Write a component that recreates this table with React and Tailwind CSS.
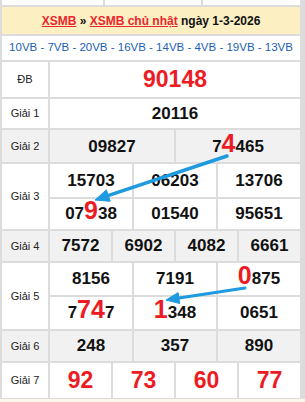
const Big = ({ children }) => (
  <span className="text-[25px] leading-[0] text-[#ed1c24]">{children}</span>
);

const Label = ({ children, gray }) => (
  <div
    className={`w-[46px] shrink-0 flex items-center justify-center text-[11px] text-[#222] ${
      gray ? "bg-[#f1f1f1]" : "bg-white"
    }`}
  >
    {children}
  </div>
);

const Cells = ({ items, h, gray, red }) => (
  <div className={`flex gap-[2px] ${h}`}>
    {items.map((it, i) => (
      <div
        key={i}
        className={`flex-1 basis-0 text-center font-bold ${
          red ? "text-[23px] text-[#ed1c24]" : "text-[17px] text-[#111]"
        } ${gray ? "bg-[#f1f1f1]" : "bg-white"}`}
      >
        {it}
      </div>
    ))}
  </div>
);

const Row = ({ label, gray, children }) => (
  <div className="flex gap-[2px]">
    <Label gray={gray}>{label}</Label>
    <div className="flex-1 flex flex-col gap-[2px]">{children}</div>
  </div>
);

export default function App() {
  return (
    <div className="relative w-[305px] h-[402px] overflow-hidden bg-[#fdf7ea] font-['Liberation_Sans',Arial,sans-serif]">
      <div className="flex flex-col gap-[2px] bg-[#dcdcdc] pl-[2px] pr-[5px] pb-[1px]">
        <div className="flex gap-[2px] h-[5px]">
          <div className="w-[101px] bg-white" />
          <div className="w-[96px] bg-white" />
          <div className="flex-1 bg-white" />
        </div>

        <div className="h-[27px] bg-[#fcf0c3] flex items-center justify-center text-[12px] font-bold text-[#111] whitespace-pre">
          <a className="text-[#e8262c] underline">XSMB</a>
          <span> » </span>
          <a className="text-[#e8262c] underline">XSMB chủ nhật</a>
          <span> ngày 1-3-2026</span>
        </div>

        <div className="h-[24px] bg-white flex items-center justify-center text-[11.5px] text-[#1b5fb0]">
          10VB - 7VB - 20VB - 16VB - 14VB - 4VB - 19VB - 13VB
        </div>

        <Row label="ĐB">
          <Cells h="h-[35px] leading-[35px]" red items={["90148"]} />
        </Row>
        <Row label="Giải 1">
          <Cells h="h-[29px] leading-[29px]" items={["20116"]} />
        </Row>
        <Row label="Giải 2" gray>
          <Cells
            h="h-[32px] leading-[34px]"
            gray
            items={["09827", <>7<Big>4</Big>465</>]}
          />
        </Row>
        <Row label="Giải 3">
          <Cells h="h-[33px] leading-[33px]" items={["15703", "06203", "13706"]} />
          <Cells
            h="h-[30px] leading-[30px]"
            items={[<>07<Big>9</Big>38</>, "01540", "95651"]}
          />
        </Row>
        <Row label="Giải 4" gray>
          <Cells h="h-[30px] leading-[30px]" gray items={["7572", "6902", "4082", "6661"]} />
        </Row>
        <Row label="Giải 5">
          <Cells
            h="h-[32px] leading-[32px]"
            items={["8156", "7191", <><Big>0</Big>875</>]}
          />
          <Cells
            h="h-[32px] leading-[32px]"
            items={[<>7<Big>74</Big>7</>, <><Big>1</Big>348</>, "0651"]}
          />
        </Row>
        <Row label="Giải 6" gray>
          <Cells h="h-[30px] leading-[30px]" gray items={["248", "357", "890"]} />
        </Row>
        <Row label="Giải 7">
          <Cells h="h-[35px] leading-[35px]" red items={["92", "73", "60", "77"]} />
        </Row>
      </div>

      <svg
        className="absolute inset-0 pointer-events-none"
        width="305"
        height="402"
        viewBox="0 0 305 402"
      >
        <g fill="#1e9ae0" stroke="#1e9ae0">
          <line x1="227" y1="156" x2="108" y2="195.6" strokeWidth="3.5" strokeLinecap="round" />
          <polygon points="95,200 110.2,201.3 106.4,189.9" strokeWidth="1" strokeLinejoin="round" />
          <line x1="245" y1="288" x2="179" y2="298" strokeWidth="3" strokeLinecap="round" />
          <polygon points="166,300 179.7,303.5 178.1,292.6" strokeWidth="1" strokeLinejoin="round" />
        </g>
      </svg>
    </div>
  );
}
